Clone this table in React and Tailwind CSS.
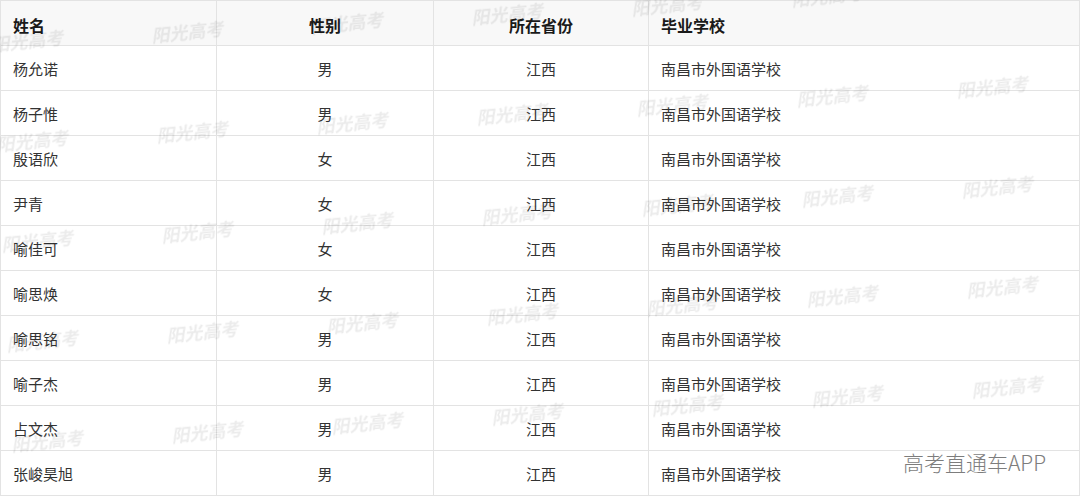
const rows = [
  ['杨允诺', '男'],
  ['杨子惟', '男'],
  ['殷语欣', '女'],
  ['尹青', '女'],
  ['喻佳可', '女'],
  ['喻思焕', '女'],
  ['喻思铭', '男'],
  ['喻子杰', '男'],
  ['占文杰', '男'],
  ['张峻昊旭', '男'],
];

// watermark grid: rows step down 100px, columns step right 160px and rise 9px
const marks = [];
for (let r = 0; r < 5; r++) {
  for (let k = 0; k < 7; k++) {
    marks.push({ x: 27 + 5 * r + 160 * k, y: 40 + 100 * r - 9 * k });
  }
}

export default function App() {
  return (
    <div
      className="relative w-[1080px] h-[497px] overflow-hidden bg-white"
      style={{ fontFamily: '"Noto Sans CJK SC", "Liberation Sans", sans-serif' }}
    >
      <table className="w-[1080px] table-fixed border-collapse text-[15px] text-[#333]">
        <colgroup>
          <col className="w-[216px]" />
          <col className="w-[217px]" />
          <col className="w-[215px]" />
          <col />
        </colgroup>
        <thead>
          <tr className="h-[45px] bg-[#f8f8f8] text-[16px] font-bold text-[#1a1a1a]">
            <th className="border border-[#e3e3e3] px-3 pt-[3px] text-left font-bold">姓名</th>
            <th className="border border-[#e3e3e3] px-3 pt-[3px] text-center font-bold">性别</th>
            <th className="border border-[#e3e3e3] px-3 pt-[3px] text-center font-bold">所在省份</th>
            <th className="border border-[#e3e3e3] px-3 pt-[3px] text-left font-bold">毕业学校</th>
          </tr>
        </thead>
        <tbody>
          {rows.map(([name, sex]) => (
            <tr key={name} className="h-[45px]">
              <td className="border border-[#e3e3e3] px-3 pt-[3px] text-left">{name}</td>
              <td className="border border-[#e3e3e3] px-3 pt-[3px] text-center">{sex}</td>
              <td className="border border-[#e3e3e3] px-3 pt-[3px] text-center">江西</td>
              <td className="border border-[#e3e3e3] px-3 pt-[3px] text-left">南昌市外国语学校</td>
            </tr>
          ))}
        </tbody>
      </table>

      {/* faint 阳光高考 watermarks */}
      <div className="pointer-events-none absolute inset-0">
        {marks.map((m, i) => (
          <span
            key={i}
            className="absolute w-[76px] text-center text-[18px] leading-[20px] font-bold italic text-black/[0.08] blur-[0.6px] -rotate-6 whitespace-nowrap"
            style={{ left: m.x - 38, top: m.y - 10 }}
          >
            阳光高考
          </span>
        ))}
      </div>

      <div className="absolute left-[903px] top-[450px] text-[21px] leading-[25px] font-light text-[#7d7d7d] whitespace-nowrap">
        高考直通车APP
      </div>
    </div>
  );
}
